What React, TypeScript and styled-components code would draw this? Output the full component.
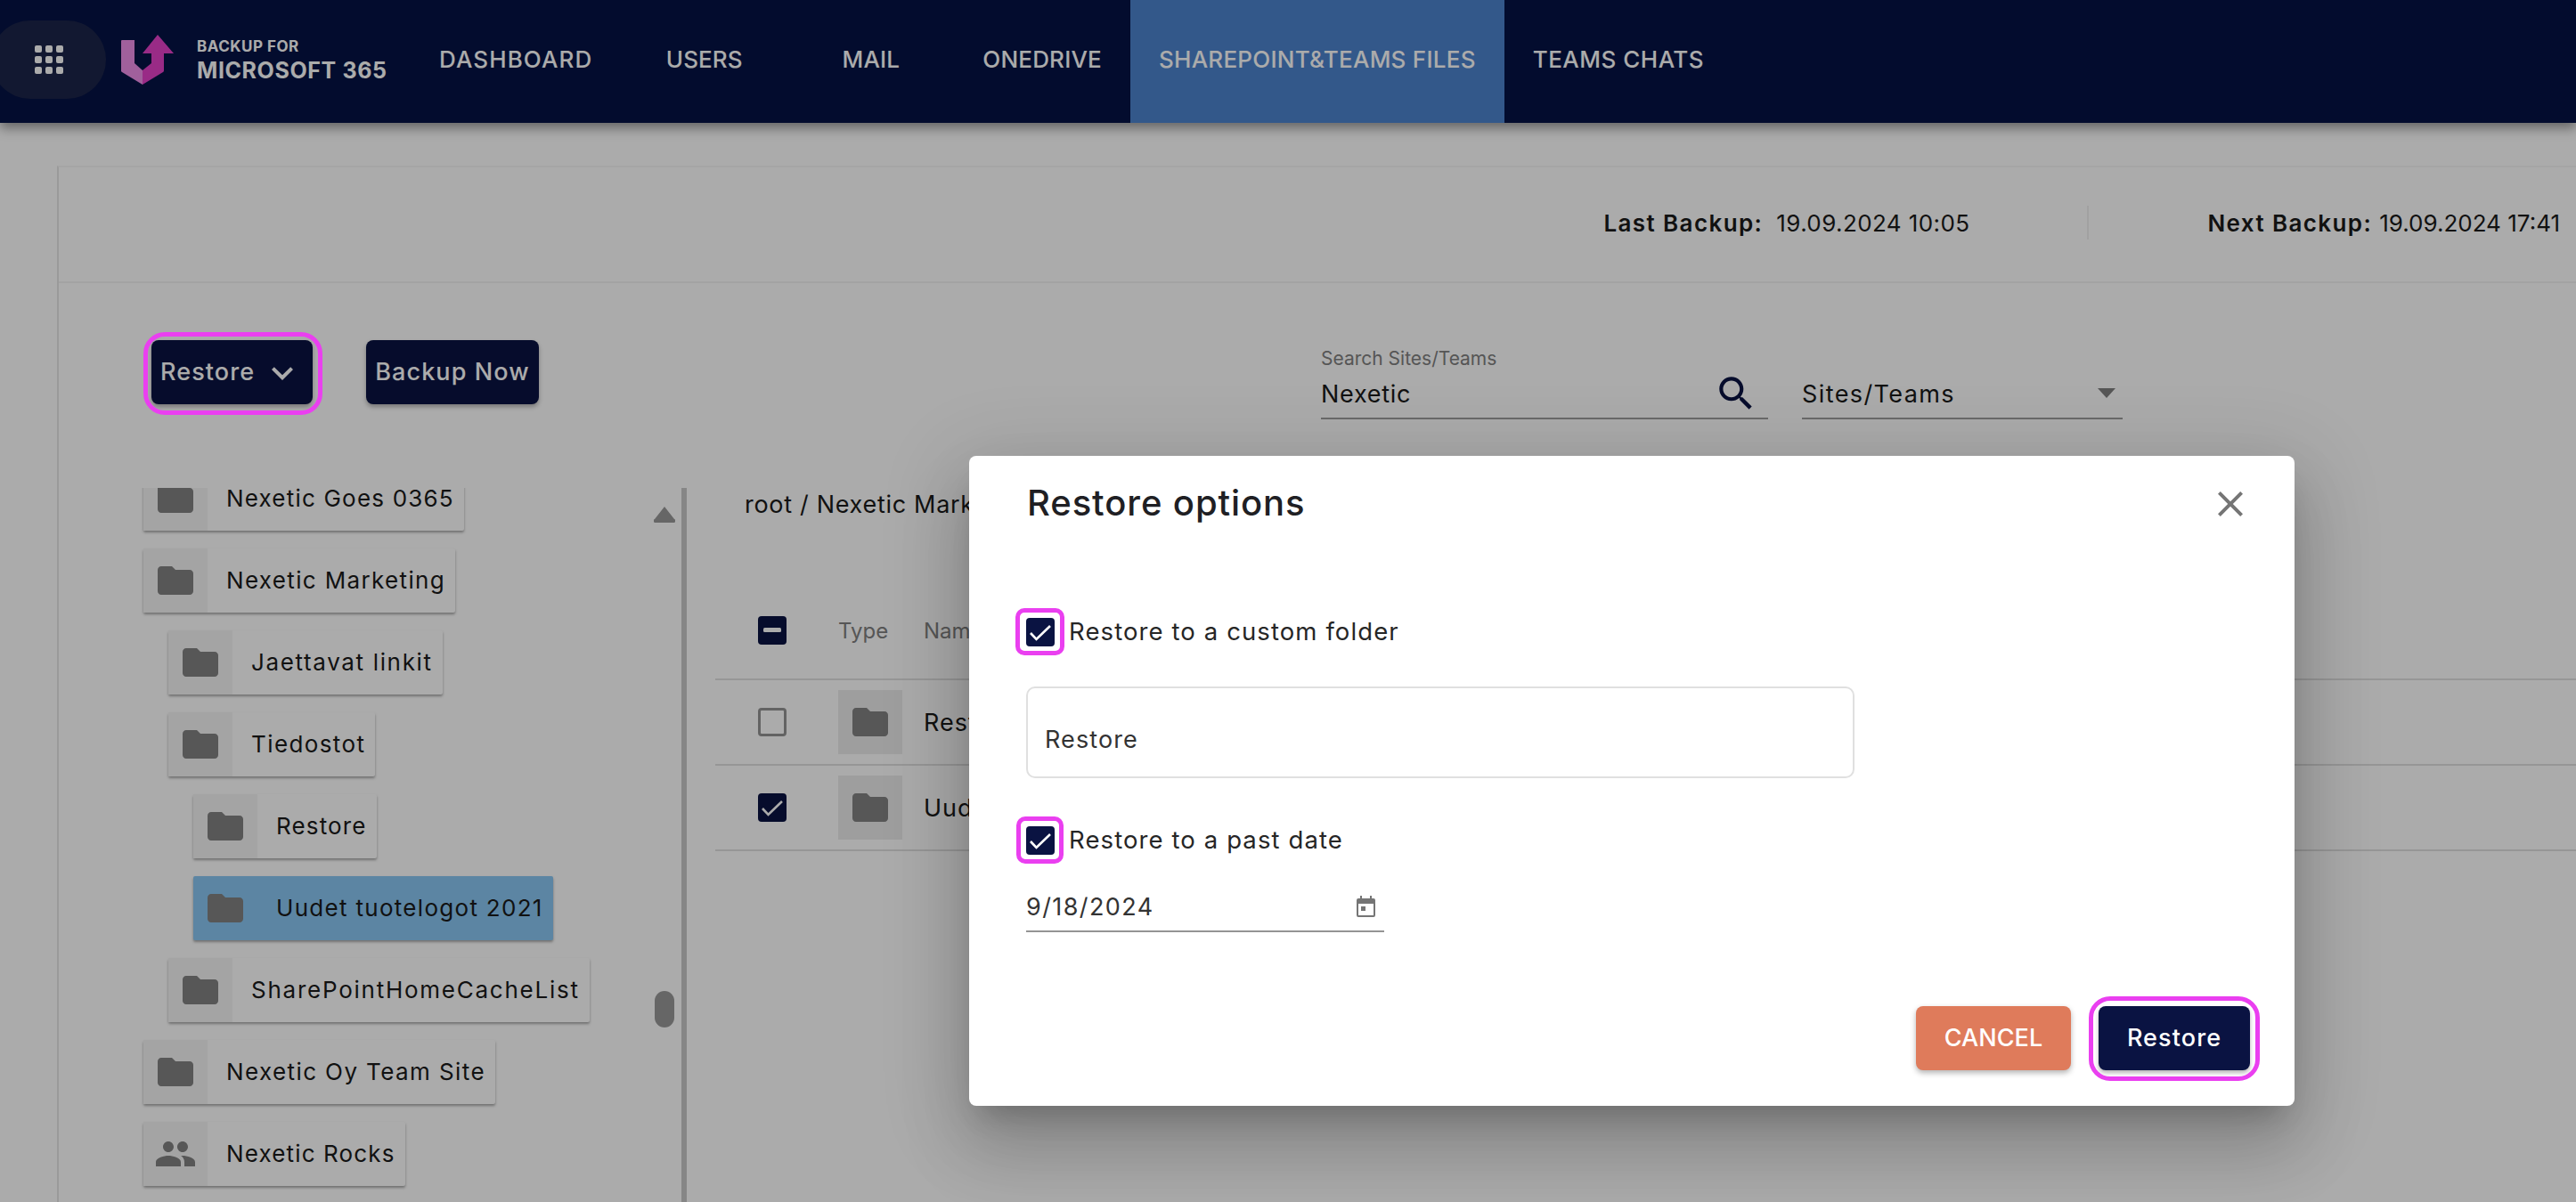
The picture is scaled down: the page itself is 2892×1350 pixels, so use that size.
import styled, { createGlobalStyle } from "styled-components";

const NAVY = "#0a1342";
const MAGENTA = "#ea3ff0";
const FONT = `Inter, "Noto Sans", sans-serif`;

const GlobalStyle = createGlobalStyle`
  html, body { margin: 0; padding: 0; background: #fff; }
  * { box-sizing: border-box; }
  body { font-family: ${FONT}; color: #1a1a1a; }
`;

const Page = styled.div`
  position: relative;
  width: 2892px;
  height: 1350px;
  overflow: hidden;
  display: flex;
  flex-direction: column;
`;

/* top bar */
const Nav = styled.header`
  flex: none;
  height: 138px;
  background: #051345;
  display: flex;
  align-items: stretch;
  box-shadow: 0 6px 12px rgba(0, 0, 0, 0.4);
`;

const AppsPill = styled.div`
  align-self: flex-start;
  margin: 23px 0 0 -10px;
  width: 129px;
  height: 88px;
  border-radius: 44px;
  background: #1c2449;
  display: grid;
  grid-template-columns: repeat(3, 8px);
  grid-auto-rows: 8px;
  gap: 4px;
  place-content: center;
`;

const AppsDot = styled.span`
  background: #fff;
  border-radius: 2px;
`;

const Logo = styled.svg`
  flex: none;
  margin: 39px 0 0 17px;
  width: 59px;
  height: 56px;
`;

const Brand = styled.div`
  flex: none;
  width: 211px;
  margin: 43px 29px 0 26px;
  color: #fff;
  font-weight: 700;
`;

const BrandTop = styled.div`
  font-size: 17px;
  line-height: 18px;
  letter-spacing: 0.5px;
`;

const BrandBottom = styled.div`
  margin-top: 5px;
  font-size: 25px;
  line-height: 26px;
  letter-spacing: 0.6px;
  white-space: nowrap;
`;

const Tab = styled.div<{ $active?: boolean; $track: number }>`
  min-width: 187px;
  padding: 0 32px 6px;
  display: flex;
  align-items: center;
  justify-content: center;
  font-size: 26px;
  font-weight: 500;
  letter-spacing: ${(p) => p.$track}px;
  color: #fff;
  white-space: nowrap;
  background: ${(p) => (p.$active ? "#4c83ce" : "transparent")};
`;

/* main panel */
const Panel = styled.main`
  flex: 1;
  min-height: 0;
  margin: 48px 0 0 64px;
  border-top: 2px solid #f6f6f6;
  border-left: 2px solid #e6e6e6;
  display: flex;
  flex-direction: column;
`;

const StatusBar = styled.div`
  flex: none;
  height: 130px;
  padding: 0 18px 4px 0;
  border-bottom: 2px solid #f4f4f4;
  display: flex;
  align-items: center;
  justify-content: flex-end;
  font-size: 26px;
  white-space: pre;
`;

const StatusLabel = styled.span<{ $gap: number }>`
  font-weight: 600;
  letter-spacing: 1.4px;
  margin-right: ${(p) => p.$gap}px;
`;

const StatusValue = styled.span<{ $track: number }>`
  letter-spacing: ${(p) => p.$track}px;
`;

const StatusDivider = styled.span`
  width: 2px;
  height: 38px;
  margin: 0 133px 0 132px;
  background: #f0f0f0;
`;

const Toolbar = styled.div`
  flex: none;
  height: 230px;
  padding: 64px 0 0 104px;
  display: flex;
  align-items: flex-start;
`;

const Button = styled.button<{ $tone?: "navy" | "orange" }>`
  position: relative;
  height: 72px;
  padding: 0 0 2px;
  border: 0;
  border-radius: 8px;
  font-family: ${FONT};
  font-size: 27px;
  font-weight: 500;
  letter-spacing: 1.1px;
  color: #fff;
  background: ${(p) => (p.$tone === "orange" ? "#df7b5b" : NAVY)};
  box-shadow: 0 3px 5px rgba(0, 0, 0, 0.3);
  display: flex;
  align-items: center;
  justify-content: center;
`;

const RestoreMenuButton = styled(Button)`
  width: 181px;
  padding-left: 10px;
  justify-content: flex-start;
  gap: 7px;
`;

const ChevronIcon = styled.svg`
  flex: none;
  width: 48px;
  height: 48px;
  margin-top: 4px;
  fill: #fff;
`;

const BackupButton = styled(Button)`
  width: 194px;
  margin-left: 60px;
`;

const Highlight = styled.span<{ $inset: string; $radius: number }>`
  position: absolute;
  inset: ${(p) => p.$inset};
  border: 5px solid ${MAGENTA};
  border-radius: ${(p) => p.$radius}px;
  z-index: 30;
  pointer-events: none;
`;

const SearchField = styled.div`
  flex: none;
  width: 502px;
  margin-left: 878px;
  letter-spacing: 0.7px;
`;

const FieldLabel = styled.div`
  height: 36px;
  padding-top: 6px;
  font-size: 21px;
  line-height: 30px;
  letter-spacing: 0;
  color: #808080;
`;

const UnderlinedRow = styled.div`
  height: 53px;
  padding-bottom: 3px;
  border-bottom: 2px solid #9e9e9e;
  display: flex;
  align-items: center;
  justify-content: space-between;
  font-size: 27px;
`;

const SearchIcon = styled.svg`
  width: 50px;
  height: 50px;
  margin-right: 11px;
  fill: ${NAVY};
`;

const SelectField = styled.div`
  flex: none;
  width: 360px;
  margin: 36px 0 0 38px;
  letter-spacing: 1.4px;
`;

const SelectArrow = styled.span`
  width: 0;
  height: 0;
  margin: 0 8px 2px 0;
  border-left: 10.5px solid transparent;
  border-right: 10.5px solid transparent;
  border-top: 11px solid #808080;
`;

const Body = styled.div`
  flex: 1;
  min-height: 0;
  display: flex;
`;

/* folder tree */
const TreeColumn = styled.div`
  flex: none;
  width: 699px;
  display: flex;
  overflow: hidden;
`;

const Tree = styled.div`
  flex: 1;
  margin-top: -24px;
  padding-left: 95px;
  display: flex;
  flex-direction: column;
  align-items: flex-start;
  gap: 20px;
`;

const Chip = styled.div<{ $level: number; $selected?: boolean }>`
  flex: none;
  height: 72px;
  margin-left: ${(p) => p.$level * 28}px;
  display: flex;
  align-items: center;
  border-radius: 2px;
  font-size: 26px;
  white-space: nowrap;
  background: ${(p) => (p.$selected ? "#89c7f3" : "#fff")};
  box-shadow: 0 2px 3px rgba(0, 0, 0, 0.35);
`;

const IconBox = styled.div<{ $clear?: boolean; $dark?: boolean }>`
  flex: none;
  width: 72px;
  height: 72px;
  display: flex;
  align-items: center;
  justify-content: center;
  background: ${(p) => (p.$clear ? "transparent" : p.$dark ? "#ececec" : "#f5f5f5")};
`;

const FileIcon = styled.svg`
  width: 48px;
  height: 48px;
  fill: #828282;
`;

const ChipLabel = styled.span<{ $track: number }>`
  padding: 0 11px 2px 21px;
  letter-spacing: ${(p) => p.$track}px;
`;

const ScrollRail = styled.div`
  flex: none;
  width: 24px;
  margin-right: 7px;
  display: flex;
  flex-direction: column;
  align-items: center;
`;

const ScrollUp = styled.svg`
  width: 24px;
  height: 19px;
  margin-top: 20px;
  fill: #999;
`;

const ScrollThumb = styled.div`
  width: 22px;
  height: 41px;
  margin-top: 526px;
  border-radius: 11px;
  background: #999;
`;

const Divider = styled.div`
  flex: none;
  width: 6px;
  background: #c8c8c8;
`;

/* file table */
const FileArea = styled.section`
  flex: 1;
  min-width: 0;
  padding-left: 32px;
`;

const Breadcrumb = styled.div`
  width: 285px;
  height: 38px;
  padding-left: 33px;
  overflow: hidden;
  font-size: 27px;
  line-height: 38px;
  letter-spacing: 0.7px;
  white-space: nowrap;
`;

const TableRow = styled.div<{ $head?: boolean }>`
  height: 96px;
  margin-top: ${(p) => (p.$head ? "82px" : "0")};
  padding: ${(p) => (p.$head ? "0 0 14px 48px" : "0 0 0 48px")};
  border-bottom: 2px solid #e0e0e0;
  display: grid;
  grid-template-columns: 90px 96px 1fr;
  align-items: center;
  font-size: 27px;
  letter-spacing: 1px;
`;

const HeadCell = styled.span`
  font-size: 24px;
  letter-spacing: 0;
  color: #808080;
`;

const Box = styled.span<{ $checked?: boolean }>`
  position: relative;
  flex: none;
  display: block;
  width: 32px;
  height: 32px;
  border-radius: 4px;
  background: ${(p) => (p.$checked ? NAVY : "transparent")};
  border: ${(p) => (p.$checked ? "0" : "3.5px solid #949494")};
`;

const BoxMark = styled.svg`
  display: block;
  width: 32px;
  height: 32px;
`;

const Tick = () => (
  <BoxMark viewBox="0 0 32 32">
    <path d="M5 17l6.5 7L27 9" fill="none" stroke="#fff" strokeWidth="2.6" />
  </BoxMark>
);

/* dialog */
const Backdrop = styled.div`
  position: absolute;
  inset: 0;
  z-index: 10;
  background: rgba(0, 0, 0, 0.33);
`;

const Dialog = styled.div`
  position: absolute;
  left: 1088px;
  top: 512px;
  width: 1488px;
  height: 730px;
  z-index: 20;
  border-radius: 8px;
  background: #fff;
  display: flex;
  flex-direction: column;
  box-shadow: 0 22px 30px -14px rgba(0, 0, 0, 0.2), 0 48px 76px 6px rgba(0, 0, 0, 0.14),
    0 18px 92px 16px rgba(0, 0, 0, 0.12);
`;

const DialogHead = styled.div`
  flex: none;
  height: 104px;
  padding: 0 48px 0 66px;
  display: flex;
  align-items: center;
  justify-content: space-between;
`;

const DialogTitle = styled.h2`
  margin: 0 0 0 -1px;
  font-size: 40px;
  font-weight: 500;
  letter-spacing: 0.9px;
  color: #1f1f24;
`;

const CloseIcon = styled.svg`
  width: 48px;
  height: 48px;
  margin-top: 4px;
  fill: #757575;
`;

const DialogBody = styled.div`
  flex: none;
  padding: 78px 0 0 64px;
`;

const OptionRow = styled.div<{ $gap?: number }>`
  margin-top: ${(p) => p.$gap ?? 0}px;
  height: 32px;
  display: flex;
  align-items: center;
  gap: 16px;
  font-size: 27.5px;
  letter-spacing: 1.1px;
  line-height: 30px;
  color: #262626;
`;

const OptionText = styled.span`
  margin-bottom: 2px;
`;

const TextField = styled.div`
  width: 930px;
  height: 103px;
  margin: 45px 0 0 0;
  padding: 16px 0 0 19px;
  border: 2px solid #e0e0e0;
  border-radius: 10px;
  display: flex;
  align-items: center;
  font-size: 27px;
  letter-spacing: 1.1px;
  color: #333;
`;

const DateField = styled.div`
  width: 402px;
  height: 60px;
  margin: 27px 0 0 0;
  padding: 4px 10px 0 0;
  border-bottom: 2px solid #949494;
  display: flex;
  align-items: center;
  justify-content: space-between;
  font-size: 27px;
  letter-spacing: 1.4px;
  color: #333;
`;

const CalendarIcon = styled.svg`
  width: 21px;
  height: 24px;
  fill: #757575;
`;

const DialogFoot = styled.div`
  margin-top: auto;
  padding: 0 50px 40px 0;
  display: flex;
  justify-content: flex-end;
  gap: 31px;
`;

const CancelButton = styled(Button)`
  width: 174px;
  letter-spacing: 0.1px;
  box-shadow: 0 3px 6px rgba(0, 0, 0, 0.3);
`;

const ConfirmButton = styled(Button)`
  width: 170px;
`;

const FOLDER = "M10 4H4c-1.1 0-1.99.9-1.99 2L2 18c0 1.1.9 2 2 2h16c1.1 0 2-.9 2-2V8c0-1.1-.9-2-2-2h-8l-2-2z";
const PEOPLE =
  "M16 11c1.66 0 2.99-1.34 2.99-3S17.66 5 16 5c-1.66 0-3 1.34-3 3s1.34 3 3 3zm-8 0c1.66 0 2.99-1.34 2.99-3S9.66 5 8 5C6.34 5 5 6.34 5 8s1.34 3 3 3zm0 2c-2.33 0-7 1.17-7 3.5V19h14v-2.5c0-2.33-4.67-3.5-7-3.5zm8 0c-.29 0-.62.02-.97.05 1.16.84 1.97 1.97 1.97 3.45V19h6v-2.5c0-2.33-4.67-3.5-7-3.5z";

const TABS = [
  { label: "DASHBOARD", track: 1.1 },
  { label: "USERS", track: 0.1 },
  { label: "MAIL", track: 0.1 },
  { label: "ONEDRIVE", track: 0.2 },
  { label: "SHAREPOINT&TEAMS FILES", track: 0.25, active: true },
  { label: "TEAMS CHATS", track: 0.5 },
];

const TREE = [
  { name: "Nexetic Goes 0365", level: 0, track: 1.2 },
  { name: "Nexetic Marketing", level: 0, track: 1.35 },
  { name: "Jaettavat linkit", level: 1, track: 1.65 },
  { name: "Tiedostot", level: 1, track: 1.4 },
  { name: "Restore", level: 2, track: 1.15 },
  { name: "Uudet tuotelogot 2021", level: 2, track: 1.3, selected: true },
  { name: "SharePointHomeCacheList", level: 1, track: 1.75 },
  { name: "Nexetic Oy Team Site", level: 0, track: 1.4 },
  { name: "Nexetic Rocks", level: 0, track: 1.15, team: true },
];

const FILES = [
  { name: "Restore", checked: false },
  { name: "Uudet tuotelogot 2021", checked: true },
];

const Glyph = ({ d }: { d: string }) => (
  <FileIcon viewBox="0 0 24 24">
    <path d={d} />
  </FileIcon>
);

export default function App() {
  return (
    <Page>
      <GlobalStyle />
      <Nav>
        <AppsPill>
          {Array.from({ length: 9 }, (_, i) => (
            <AppsDot key={i} />
          ))}
        </AppsPill>
        <Logo viewBox="0 0 59 56">
          <path d="M1 6h14v26l9 8v16L1 42a2 2 0 0 1-1-2V7a1 1 0 0 1 1-1z" fill="#ef8fe9" />
          <path d="M24 40l10-8V21H24L41 0l18 21H48v19a2 2 0 0 1-1 2L24 56z" fill="#e440c8" />
        </Logo>
        <Brand>
          <BrandTop>BACKUP FOR</BrandTop>
          <BrandBottom>MICROSOFT 365</BrandBottom>
        </Brand>
        {TABS.map((t) => (
          <Tab key={t.label} $active={t.active} $track={t.track}>
            {t.label}
          </Tab>
        ))}
      </Nav>

      <Panel>
        <StatusBar>
          <StatusLabel $gap={15}>Last Backup:</StatusLabel>
          <StatusValue $track={0.4}>19.09.2024 10:05</StatusValue>
          <StatusDivider />
          <StatusLabel $gap={8}>Next Backup:</StatusLabel>
          <StatusValue $track={0}>19.09.2024 17:41</StatusValue>
        </StatusBar>

        <Toolbar>
          <RestoreMenuButton>
            Restore
            <ChevronIcon viewBox="0 0 24 24">
              <path d="M16.59 8.59 12 13.17 7.41 8.59 6 10l6 6 6-6z" />
            </ChevronIcon>
            <Highlight $inset="-9px -11px -12px -9px" $radius={24} />
          </RestoreMenuButton>
          <BackupButton>Backup Now</BackupButton>
          <SearchField>
            <FieldLabel>Search Sites/Teams</FieldLabel>
            <UnderlinedRow>
              Nexetic
              <SearchIcon viewBox="0 0 24 24">
                <path d="M15.5 14h-.79l-.28-.27C15.41 12.59 16 11.11 16 9.5 16 5.91 13.09 3 9.5 3S3 5.91 3 9.5 5.91 16 9.5 16c1.61 0 3.09-.59 4.23-1.57l.27.28v.79l5 4.99L20.49 19l-4.99-5zm-6 0C7.01 14 5 11.99 5 9.5S7.01 5 9.5 5 14 7.01 14 9.5 11.99 14 9.5 14z" />
              </SearchIcon>
            </UnderlinedRow>
          </SearchField>
          <SelectField>
            <UnderlinedRow>
              Sites/Teams
              <SelectArrow />
            </UnderlinedRow>
          </SelectField>
        </Toolbar>

        <Body>
          <TreeColumn>
            <Tree>
              {TREE.map((n) => (
                <Chip key={n.name} $level={n.level} $selected={n.selected}>
                  <IconBox $clear={n.selected}>
                    <Glyph d={n.team ? PEOPLE : FOLDER} />
                  </IconBox>
                  <ChipLabel $track={n.track}>{n.name}</ChipLabel>
                </Chip>
              ))}
            </Tree>
            <ScrollRail>
              <ScrollUp viewBox="0 0 24 19">
                <path d="M12 1 23 15a2 2 0 0 1-2 4H3a2 2 0 0 1-2-4z" />
              </ScrollUp>
              <ScrollThumb />
            </ScrollRail>
          </TreeColumn>
          <Divider />

          <FileArea>
            <Breadcrumb>root / Nexetic Marketing</Breadcrumb>
            <TableRow $head>
              <Box $checked>
                <BoxMark viewBox="0 0 32 32">
                  <rect x="6" y="13" width="20" height="5" rx="1.5" fill="#fff" />
                </BoxMark>
              </Box>
              <HeadCell>Type</HeadCell>
              <HeadCell>Name</HeadCell>
            </TableRow>
            {FILES.map((f) => (
              <TableRow key={f.name}>
                <Box $checked={f.checked}>{f.checked && <Tick />}</Box>
                <IconBox $dark>
                  <Glyph d={FOLDER} />
                </IconBox>
                <span>{f.name}</span>
              </TableRow>
            ))}
          </FileArea>
        </Body>
      </Panel>

      <Backdrop />
      <Dialog>
        <DialogHead>
          <DialogTitle>Restore options</DialogTitle>
          <CloseIcon viewBox="0 0 24 24">
            <path d="M19 6.41 17.59 5 12 10.59 6.41 5 5 6.41 10.59 12 5 17.59 6.41 19 12 13.41 17.59 19 19 17.59 13.41 12z" />
          </CloseIcon>
        </DialogHead>
        <DialogBody>
          <OptionRow>
            <Box $checked>
              <Tick />
              <Highlight $inset="-11px -11px -10px -12px" $radius={10} />
            </Box>
            <OptionText>Restore to a custom folder</OptionText>
          </OptionRow>
          <TextField>Restore</TextField>
          <OptionRow $gap={54}>
            <Box $checked>
              <Tick />
              <Highlight $inset="-11px -10px -10px -11px" $radius={10} />
            </Box>
            <OptionText>Restore to a past date</OptionText>
          </OptionRow>
          <DateField>
            9/18/2024
            <CalendarIcon viewBox="0 0 21 24">
              <path d="M4 0h2v3h9V0h2v3h2a2 2 0 0 1 2 2v17a2 2 0 0 1-2 2H2a2 2 0 0 1-2-2V5a2 2 0 0 1 2-2h2zM2 9v13h17V9zm3 3h5v5H5z" />
            </CalendarIcon>
          </DateField>
        </DialogBody>
        <DialogFoot>
          <CancelButton $tone="orange">CANCEL</CancelButton>
          <ConfirmButton>
            Restore
            <Highlight $inset="-11px -11px -12px -11px" $radius={24} />
          </ConfirmButton>
        </DialogFoot>
      </Dialog>
    </Page>
  );
}
